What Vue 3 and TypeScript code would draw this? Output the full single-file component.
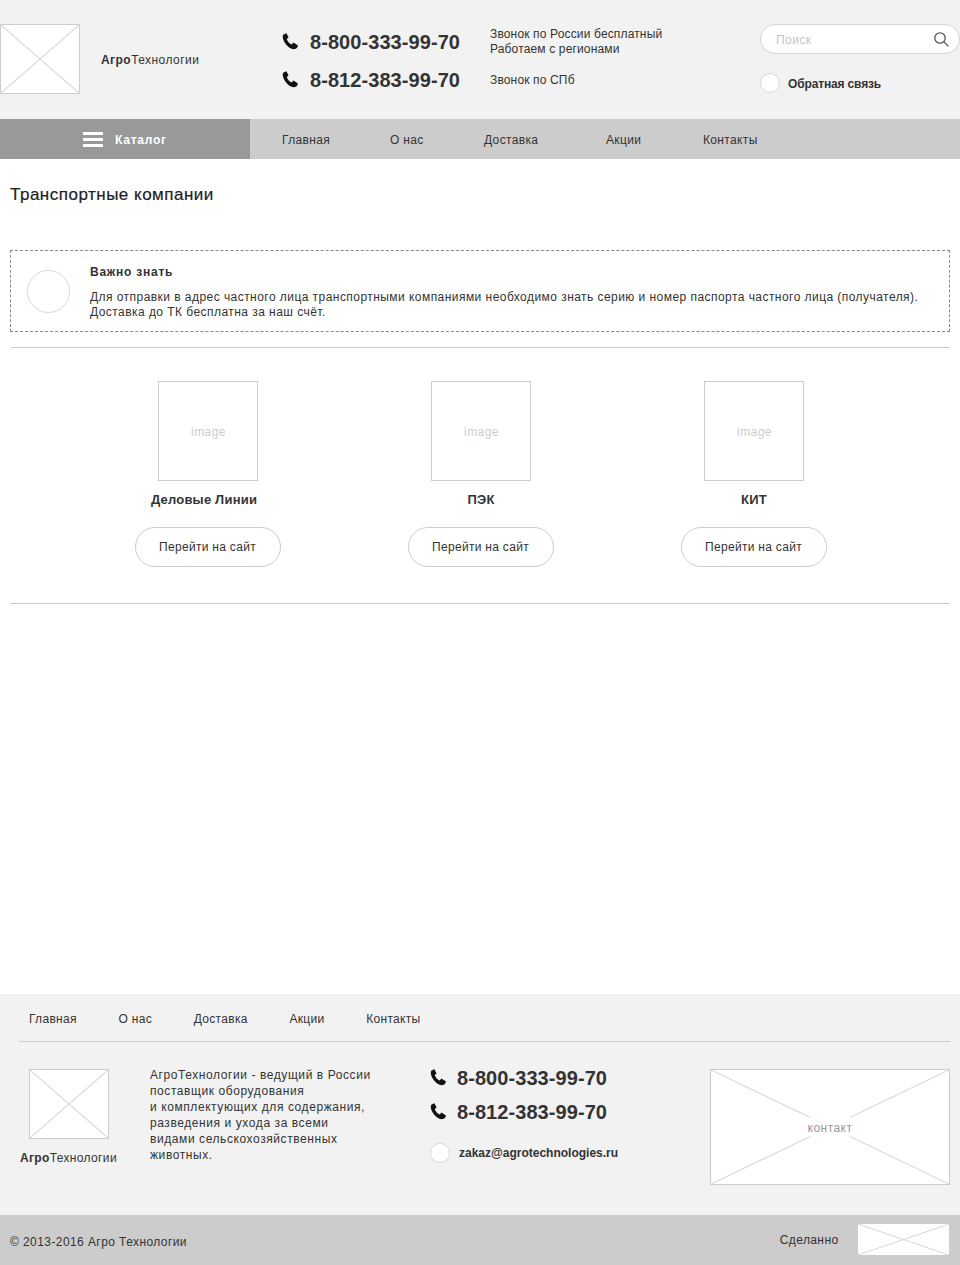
<script setup lang="ts">
const nav = [
  { label: 'Главная', w: 108 },
  { label: 'О нас', w: 94 },
  { label: 'Доставка', w: 122 },
  { label: 'Акции', w: 97 },
  { label: 'Контакты', w: 80 },
]
const footNav = ['Главная', 'О нас', 'Доставка', 'Акции', 'Контакты']
const companies = ['Деловые Линии', 'ПЭК', 'КИТ']
const phonePath = 'M1.5 1.6 L4.4 0.2 L6.6 4.6 L4.8 6 C5.4 8.4 7.6 10.8 9.8 11.6 L11.4 9.6 L16 12.6 L15.2 14.6 C14 16.4 11.4 16.8 9 15.6 C5.2 13.8 1.8 9.4 0.9 5 C0.6 3.6 0.8 2.4 1.5 1.6 Z'
</script>

<template>
  <div class="page">
    <header class="head">
      <div class="ph logo"><svg viewBox="0 0 80 70" preserveAspectRatio="none"><path d="M0 0L80 70M80 0L0 70" /></svg></div>
      <div class="brand"><b>Агро</b>Технологии</div>
      <div class="phones">
        <div class="phone">
          <svg class="tel" viewBox="0 0 17 17"><path :d="phonePath" /></svg>
          <span>8-800-333-99-70</span>
        </div>
        <div class="phone">
          <svg class="tel" viewBox="0 0 17 17"><path :d="phonePath" /></svg>
          <span>8-812-383-99-70</span>
        </div>
      </div>
      <div class="notes">
        <p>Звонок по России бесплатный<br />Работаем с регионами</p>
        <p class="spb">Звонок по СПб</p>
      </div>
      <div class="side">
        <div class="search">
          <span>Поиск</span>
          <svg viewBox="0 0 15 15"><circle cx="6" cy="6" r="5.2" /><path d="M9.8 9.8L14.4 14.4" /></svg>
        </div>
        <div class="callback"><i class="dot"></i><b>Обратная связь</b></div>
      </div>
    </header>

    <nav class="bar">
      <div class="catalog"><i class="burger"><u></u><u></u><u></u></i><b>Каталог</b></div>
      <ul>
        <li v-for="n in nav" :key="n.label" :style="{ width: n.w + 'px' }">{{ n.label }}</li>
      </ul>
    </nav>

    <main class="content">
      <h1>Транспортные компании</h1>
      <section class="notice">
        <i class="ring"></i>
        <div>
          <h2>Важно знать</h2>
          <p>Для отправки в адрес частного лица транспортными компаниями необходимо знать серию и номер паспорта частного лица (получателя).<br />Доставка до ТК бесплатна за наш счёт.</p>
        </div>
      </section>
      <hr class="rule first" />
      <div class="companies">
        <article v-for="c in companies" :key="c">
          <div class="pic">image</div>
          <h3>{{ c }}</h3>
          <a class="btn">Перейти на сайт</a>
        </article>
      </div>
      <hr class="rule second" />
    </main>

    <footer class="foot">
      <ul class="foot-nav">
        <li v-for="n in footNav" :key="n">{{ n }}</li>
      </ul>
      <div class="foot-main">
        <div class="foot-brand">
          <div class="ph flogo"><svg viewBox="0 0 80 70" preserveAspectRatio="none"><path d="M0 0L80 70M80 0L0 70" /></svg></div>
          <div class="fname"><b>Агро</b>Технологии</div>
        </div>
        <p class="about">АгроТехнологии - ведущий в России<br />поставщик оборудования<br />и комплектующих для содержания,<br />разведения и ухода за всеми<br />видами сельскохозяйственных<br />животных.</p>
        <div class="foot-contacts">
          <div class="fphone">
            <svg class="tel" viewBox="0 0 17 17"><path :d="phonePath" /></svg>
            <span>8-800-333-99-70</span>
          </div>
          <div class="fphone">
            <svg class="tel" viewBox="0 0 17 17"><path :d="phonePath" /></svg>
            <span>8-812-383-99-70</span>
          </div>
          <div class="mail"><i class="dot"></i><b>zakaz@agrotechnologies.ru</b></div>
        </div>
        <div class="ph map">
          <svg viewBox="0 0 240 116" preserveAspectRatio="none"><path d="M0 0L240 116M240 0L0 116" /></svg>
          <span>контакт</span>
        </div>
      </div>
      <div class="copy">
        <span class="copyright">© 2013-2016 Агро Технологии</span>
        <div class="made">
          <span>Сделанно</span>
          <div class="madeby"><svg viewBox="0 0 91 31" preserveAspectRatio="none"><path d="M0 0L91 31M91 0L0 31" /></svg></div>
        </div>
      </div>
    </footer>
  </div>
</template>

<style>
html, body { margin: 0; background: #fff; }
</style>

<style scoped>
.page {
  width: 960px;
  height: 1265px;
  display: flex;
  flex-direction: column;
  font-family: "Liberation Sans", Arial, sans-serif;
  font-size: 12px;
  color: #333;
  letter-spacing: 0.45px;
  overflow: hidden;
}
p, h1, h2, h3, ul { margin: 0; padding: 0; }
ul { list-style: none; }
i { display: block; font-style: normal; }
.ph {
  position: relative;
  box-sizing: border-box;
  background: #fff;
  border: 1px solid #ccc;
}
.ph svg, .madeby svg { display: block; width: 100%; height: 100%; }
.ph path, .madeby path { stroke: #d6d6d6; stroke-width: 1; fill: none; vector-effect: non-scaling-stroke; }
.dot {
  width: 20px;
  height: 20px;
  box-sizing: border-box;
  border-radius: 50%;
  background: #fff;
  border: 1px solid #d8d8d8;
  flex: none;
}
.tel { width: 17px; height: 17px; flex: none; }
.tel path { fill: #111; }

.head {
  height: 119px;
  background: #f2f2f2;
  display: flex;
  align-items: flex-start;
  flex: none;
}
.logo { width: 80px; height: 70px; margin-top: 24px; }
.brand { width: 181px; margin: 53px 0 0 21px; line-height: 15px; }
.phones { width: 207px; padding-top: 23px; }
.phone {
  display: flex;
  align-items: center;
  height: 38px;
  gap: 10px;
  font-size: 20px;
  font-weight: 700;
  letter-spacing: 0.07px;
}
.phone span { margin-left: 1px; }
.phone .tel { margin-top: -2px; }
.notes { width: 270px; margin-left: 1px; padding-top: 27px; line-height: 15px; letter-spacing: 0.15px; }
.spb { margin-top: 16px; }
.side { width: 200px; padding-top: 24px; }
.search {
  box-sizing: border-box;
  height: 30px;
  border: 1px solid #d4d4d4;
  border-radius: 15px;
  background: #fff;
  display: flex;
  align-items: center;
  justify-content: space-between;
  padding: 0 10px 0 15px;
  color: #c4c4c4;
}
.search span { padding-top: 2px; }
.search svg { width: 15px; height: 15px; fill: none; stroke: #555; stroke-width: 1.3; }
.callback {
  display: flex;
  align-items: center;
  gap: 8px;
  margin-top: 19px;
  letter-spacing: -0.15px;
}
.callback b { padding-top: 1px; }

.bar { height: 40px; display: flex; flex: none; background: #ccc; }
.catalog {
  width: 250px;
  background: #999;
  color: #fff;
  display: flex;
  align-items: center;
  padding-left: 83px;
  box-sizing: border-box;
  gap: 12px;
  letter-spacing: 0.75px;
}
.catalog b { padding-top: 2px; }
.burger { display: flex; flex-direction: column; gap: 3px; width: 20px; }
.burger u { display: block; height: 3px; background: #fff; }
.bar ul { display: flex; align-items: center; padding: 2px 0 0 32px; letter-spacing: 0.35px; }

.content { flex: 1; padding: 0 10px; }
h1 { font-size: 17px; font-weight: 400; line-height: 20px; margin-top: 26px; color: #222; letter-spacing: 0.5px; -webkit-text-stroke: 0.2px #222; }
.notice {
  box-sizing: border-box;
  height: 82px;
  margin-top: 45px;
  border: 1px dashed #888;
  display: flex;
}
.ring {
  width: 43px;
  height: 43px;
  box-sizing: border-box;
  border: 1px solid #d8d8d8;
  border-radius: 50%;
  margin: 19px 20px 0 16px;
  flex: none;
}
.notice h2 { font-size: 12px; line-height: 15px; margin-top: 14px; letter-spacing: 0.75px; }
.notice p { line-height: 15px; margin-top: 10px; }
.rule { border: 0; height: 1px; background: #ccc; margin: 0; }
.rule.first { margin-top: 15px; margin-left: 1px; }
.rule.second { margin-top: 36px; }
.companies {
  display: grid;
  grid-template-columns: repeat(3, 273px);
  justify-content: start;
  padding: 33px 0 0 61px;
}
article { display: flex; flex-direction: column; align-items: center; }
.pic {
  box-sizing: border-box;
  width: 100px;
  height: 100px;
  border: 1px solid #ccc;
  display: flex;
  align-items: center;
  justify-content: center;
  color: #ccc;
  padding: 2px 0 0 2px;
}
article h3 { font-size: 13px; line-height: 16px; margin-top: 11px; letter-spacing: 0.2px; padding-left: 1px; }
article:first-child h3 { padding: 0 7px 0 0; }
.btn {
  box-sizing: border-box;
  width: 146px;
  height: 40px;
  margin-top: 19px;
  border: 1px solid #ccc;
  border-radius: 20px;
  display: flex;
  align-items: center;
  justify-content: center;
  letter-spacing: 0.3px;
}

.foot { flex: none; background: #f2f2f2; }
.foot-nav {
  display: flex;
  gap: 41.75px;
  margin-left: 19px;
  padding: 2px 0 0 10px;
  margin-right: 10px;
  height: 48px;
  align-items: center;
  border-bottom: 1px solid #ccc;
  box-sizing: border-box;
  letter-spacing: 0.3px;
}
.foot-main { display: flex; height: 173px; padding-top: 27px; box-sizing: border-box; }
.foot-brand { width: 150px; flex: none; }
.flogo { width: 80px; height: 70px; margin-left: 29px; }
.fname { margin: 12px 0 0 20px; line-height: 15px; letter-spacing: 0.35px; }
.about { width: 280px; flex: none; line-height: 16px; letter-spacing: 0.58px; margin-top: -2px; }
.foot-contacts { width: 280px; flex: none; margin-top: -8px; }
.fphone { display: flex; align-items: center; gap: 10px; height: 34px; font-size: 20px; font-weight: 700; letter-spacing: 0.07px; }
.fphone .tel { margin-top: -2px; }
.mail { display: flex; align-items: center; gap: 9px; margin-top: 14px; letter-spacing: 0; }
.map { width: 240px; height: 116px; }
.map span {
  position: absolute;
  top: 50%;
  left: 50%;
  transform: translate(-50%, -50%);
  background: #fff;
  padding: 1px 8px 0;
  color: #999;
  line-height: 18px;
}
.copy {
  height: 50px;
  background: #ccc;
  display: flex;
  align-items: center;
  justify-content: space-between;
  padding: 0 11px 0 10px;
}
.copyright { padding-top: 4px; letter-spacing: 0.42px; }
.made { display: flex; align-items: center; gap: 20px; }
.made span { margin-right: -0.5px; letter-spacing: 0.4px; }
.madeby { width: 91px; height: 31px; background: #fff; margin-top: -2px; }
</style>
